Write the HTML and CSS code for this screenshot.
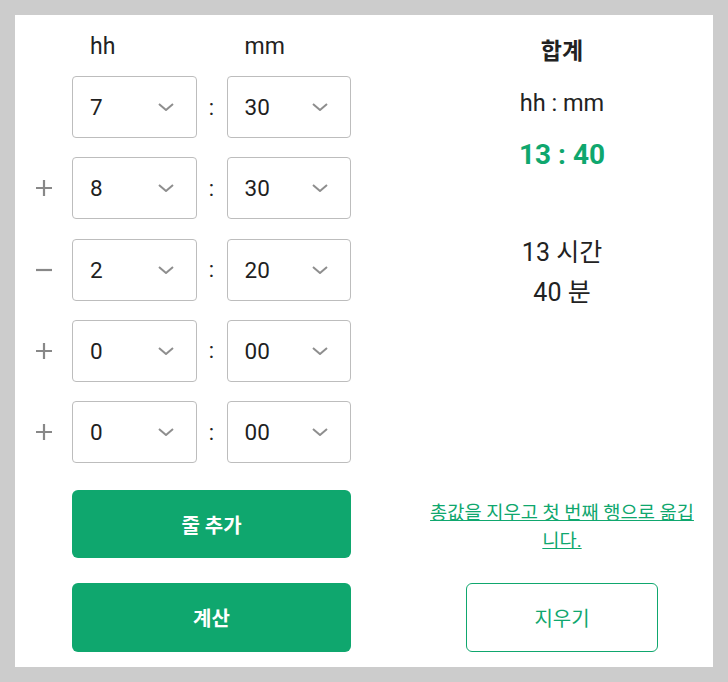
FILE: index.html
```html
<!DOCTYPE html>
<html lang="ko">
<head>
<meta charset="utf-8">
<link rel="stylesheet" href="styles.css">
</head>
<body>
<div class="panel">
  <div class="left">
    <div class="grid head">
      <span></span><span class="hlabel">hh</span><span></span><span class="hlabel">mm</span>
    </div>
    <div class="rows">
      <div class="grid row">
        <span class="sign"></span>
        <div class="sel"><span>7</span><svg class="chev" viewBox="0 0 16 8"><path d="M1 1l7 6 7-6"/></svg></div>
        <span class="colon">:</span>
        <div class="sel"><span>30</span><svg class="chev" viewBox="0 0 16 8"><path d="M1 1l7 6 7-6"/></svg></div>
      </div>
      <div class="grid row">
        <span class="sign"><svg viewBox="0 0 16 16"><path d="M8 0v16M0 8h16"/></svg></span>
        <div class="sel"><span>8</span><svg class="chev" viewBox="0 0 16 8"><path d="M1 1l7 6 7-6"/></svg></div>
        <span class="colon">:</span>
        <div class="sel"><span>30</span><svg class="chev" viewBox="0 0 16 8"><path d="M1 1l7 6 7-6"/></svg></div>
      </div>
      <div class="grid row">
        <span class="sign"><svg viewBox="0 0 16 16"><path d="M0 8h16"/></svg></span>
        <div class="sel"><span>2</span><svg class="chev" viewBox="0 0 16 8"><path d="M1 1l7 6 7-6"/></svg></div>
        <span class="colon">:</span>
        <div class="sel"><span>20</span><svg class="chev" viewBox="0 0 16 8"><path d="M1 1l7 6 7-6"/></svg></div>
      </div>
      <div class="grid row">
        <span class="sign"><svg viewBox="0 0 16 16"><path d="M8 0v16M0 8h16"/></svg></span>
        <div class="sel"><span>0</span><svg class="chev" viewBox="0 0 16 8"><path d="M1 1l7 6 7-6"/></svg></div>
        <span class="colon">:</span>
        <div class="sel"><span>00</span><svg class="chev" viewBox="0 0 16 8"><path d="M1 1l7 6 7-6"/></svg></div>
      </div>
      <div class="grid row">
        <span class="sign"><svg viewBox="0 0 16 16"><path d="M8 0v16M0 8h16"/></svg></span>
        <div class="sel"><span>0</span><svg class="chev" viewBox="0 0 16 8"><path d="M1 1l7 6 7-6"/></svg></div>
        <span class="colon">:</span>
        <div class="sel"><span>00</span><svg class="chev" viewBox="0 0 16 8"><path d="M1 1l7 6 7-6"/></svg></div>
      </div>
    </div>
    <button class="btn btn-add">줄 추가</button>
    <button class="btn btn-calc">계산</button>
  </div>
  <div class="right">
    <div class="title">합계</div>
    <div class="fmt">hh : mm</div>
    <div class="total">13 : 40</div>
    <div class="words">13 시간</div>
    <div class="words">40 분</div>
    <a class="link" href="#">총값을 지우고 첫 번째 행으로 옮깁니다.</a>
    <button class="btn-clear">지우기</button>
  </div>
</div>
</body>
</html>
```

FILE: styles.css
```css
html, body {
  margin: 0;
  padding: 0;
}
body {
  background: #cccccc;
  padding: 15px;
  font-family: Roboto, "Noto Sans CJK KR", sans-serif;
  color: #222222;
}
.panel {
  background: #ffffff;
  width: 698px;
  height: 652px;
  display: flex;
  box-sizing: border-box;
}
.left {
  width: 396px;
  display: flex;
  flex-direction: column;
  padding-top: 15px;
}
.grid {
  display: grid;
  grid-template-columns: 57px 124.5px 30px 124.5px;
}
.head {
  height: 34px;
  line-height: 34px;
  font-size: 23px;
}
.hlabel {
  padding-left: 18px;
}
.rows {
  margin-top: 12px;
  display: flex;
  flex-direction: column;
  gap: 19.25px;
}
.row {
  height: 62px;
  align-items: center;
}
.sign {
  display: flex;
  justify-content: center;
  align-items: center;
}
.sign svg {
  width: 16px;
  height: 16px;
  stroke: #888888;
  stroke-width: 2.2;
  fill: none;
}
.sel {
  height: 62px;
  box-sizing: border-box;
  border: 1px solid #bdbdbd;
  border-radius: 4px;
  display: flex;
  align-items: center;
  justify-content: space-between;
  padding: 0 22px 0 17px;
  font-size: 22.5px;
  color: #1f1f1f;
}
.chev {
  width: 16px;
  height: 8px;
  stroke: #8e8e8e;
  stroke-width: 2;
  fill: none;
}
.colon {
  text-align: center;
  font-size: 22px;
}
.btn {
  margin-left: 57px;
  width: 279px;
  border: none;
  border-radius: 6px;
  background: #0fa76e;
  color: #ffffff;
  font-family: Roboto, "Noto Sans CJK KR", sans-serif;
  font-size: 20px;
  font-weight: 700;
  padding: 0;
}
.btn-add {
  margin-top: 27px;
  height: 68px;
}
.btn-calc {
  margin-top: 25px;
  height: 69px;
}
.right {
  width: 302px;
  display: flex;
  flex-direction: column;
  align-items: center;
  text-align: center;
  padding-top: 22px;
  padding-bottom: 15px;
  box-sizing: border-box;
}
.title {
  font-size: 23px;
  font-weight: 700;
  line-height: 30px;
}
.fmt {
  margin-top: 21px;
  font-size: 23.5px;
  line-height: 30px;
}
.total {
  margin-top: 19px;
  font-size: 28px;
  font-weight: 700;
  line-height: 36px;
  color: #0fa76e;
}
.words {
  font-size: 25px;
  line-height: 40px;
}
.total + .words {
  margin-top: 60px;
}
.link {
  margin-top: auto;
  width: 272px;
  font-size: 18.7px;
  line-height: 28px;
  color: #0fa76e;
  text-decoration: underline;
}
.btn-clear {
  margin-top: 28px;
  width: 192px;
  height: 69px;
  background: #ffffff;
  border: 1px solid #0fa76e;
  border-radius: 6px;
  color: #0fa76e;
  font-family: Roboto, "Noto Sans CJK KR", sans-serif;
  font-size: 20px;
  padding: 0;
}
```
